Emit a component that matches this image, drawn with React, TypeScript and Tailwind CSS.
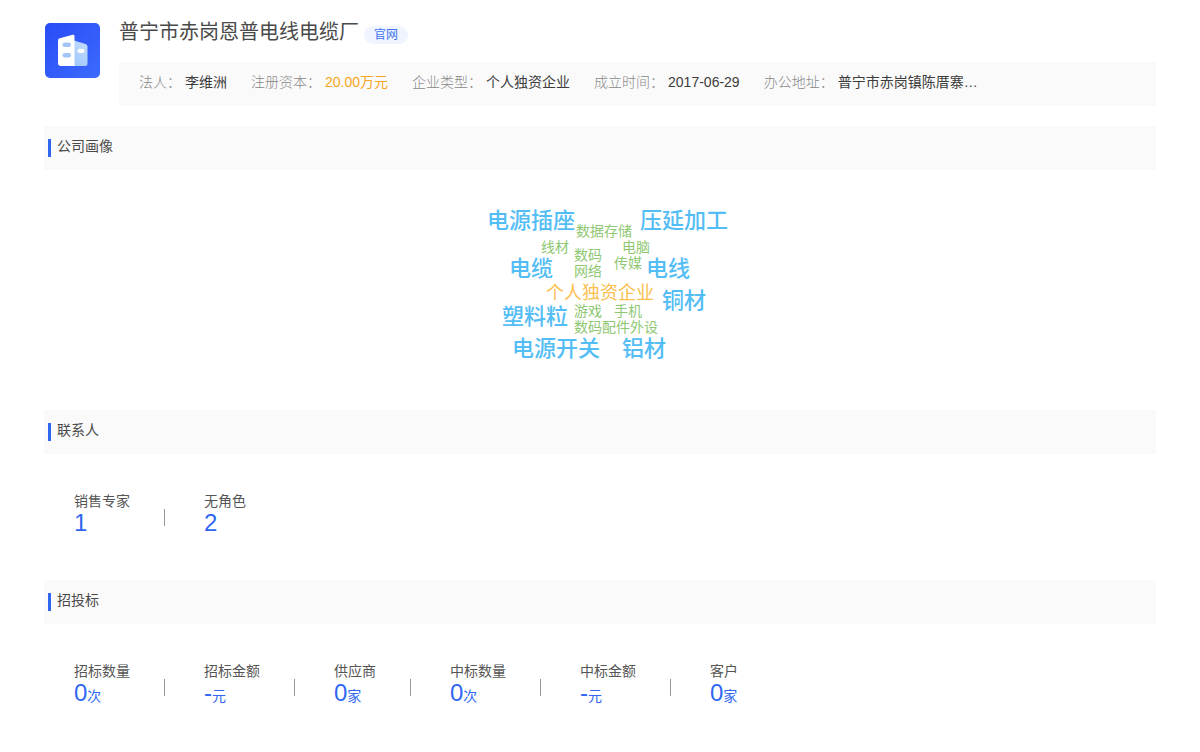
import type { ReactNode } from "react";

type Stat = { label: string; value: string; unit?: string };
type Word = { text: string; className: string };

const info = [
  { label: "法人：", value: "李维洲" },
  { label: "注册资本：", value: "20.00万元", highlight: true },
  { label: "企业类型：", value: "个人独资企业" },
  { label: "成立时间：", value: "2017-06-29" },
  { label: "办公地址：", value: "普宁市赤岗镇陈厝寨…" },
];

const contacts: Stat[] = [
  { label: "销售专家", value: "1" },
  { label: "无角色", value: "2" },
];

const bids: Stat[] = [
  { label: "招标数量", value: "0", unit: "次" },
  { label: "招标金额", value: "-", unit: "元" },
  { label: "供应商", value: "0", unit: "家" },
  { label: "中标数量", value: "0", unit: "次" },
  { label: "中标金额", value: "-", unit: "元" },
  { label: "客户", value: "0", unit: "家" },
];

const large = "text-[22px] leading-8 font-medium text-[#53bdf5]";
const small = "text-sm leading-4 text-[#8fc873]";

const words: Word[] = [
  { text: "电源插座", className: `left-[7px] top-0 ${large}` },
  { text: "压延加工", className: `left-40 top-0 ${large}` },
  { text: "数据存储", className: `left-24 top-[18px] ${small}` },
  { text: "线材", className: `left-[61px] top-[34px] ${small}` },
  { text: "电脑", className: `left-[142px] top-[34px] ${small}` },
  { text: "数码", className: `left-[94px] top-[42px] ${small}` },
  { text: "传媒", className: `left-[134px] top-[50px] ${small}` },
  { text: "电缆", className: `left-[29px] top-12 ${large}` },
  { text: "网络", className: `left-[94px] top-[58px] ${small}` },
  { text: "电线", className: `left-[166px] top-12 ${large}` },
  { text: "个人独资企业", className: "left-[66px] top-[76px] text-lg leading-6 text-[#fac050]" },
  { text: "铜材", className: `left-[182px] top-20 ${large}` },
  { text: "塑料粒", className: `left-[22px] top-24 ${large}` },
  { text: "游戏", className: `left-[94px] top-[98px] ${small}` },
  { text: "手机", className: `left-[134px] top-[98px] ${small}` },
  { text: "数码配件外设", className: `left-[94px] top-[114px] ${small}` },
  { text: "电源开关", className: `left-8 top-32 ${large}` },
  { text: "铝材", className: `left-[142px] top-32 ${large}` },
];

function CompanyLogo() {
  return (
    <svg className="mt-px ml-px size-[55px] shrink-0" viewBox="0 0 55 55" fill="none" aria-hidden="true">
      <defs>
        <linearGradient id="logo-bg" x1="0" y1="0" x2="55" y2="55" gradientUnits="userSpaceOnUse">
          <stop stopColor="#2a4bf8" />
          <stop offset="1" stopColor="#3b6bfb" />
        </linearGradient>
        <linearGradient id="logo-side" x1="29" y1="42" x2="42" y2="20" gradientUnits="userSpaceOnUse">
          <stop stopColor="#a3c8fb" />
          <stop offset="1" stopColor="#c0dcfd" />
        </linearGradient>
      </defs>
      <rect width="55" height="55" rx="5" fill="url(#logo-bg)" />
      <path d="M29 17.5L40.6 21Q42.5 21.6 42.5 23.5V40.5Q42.5 43 40 43H29Z" fill="url(#logo-side)" />
      <path d="M14.8 15.2L27.8 11.8Q29.5 11.4 29.5 13V43H16Q13 43 13 40V17.5Q13 15.7 14.8 15.2Z" fill="#fff" />
      <rect x="17.5" y="19.5" width="8.5" height="4.5" rx="2.25" fill="#a3c5f8" />
      <rect x="17.5" y="30" width="8.5" height="4.5" rx="2.25" fill="#a3c5f8" />
      <rect x="32.5" y="25.8" width="7" height="4.2" rx="2.1" fill="#fff" />
    </svg>
  );
}

function Section({ title, children }: { title: string; children: ReactNode }) {
  return (
    <section>
      <div className="flex h-11 items-center bg-[#fafafa] pl-1">
        <div className="mr-1.5 h-[18px] w-[3px] bg-[#2f67f0]" />
        <h2 className="pb-1 text-sm text-[#4a4a4a]">{title}</h2>
      </div>
      {children}
    </section>
  );
}

function Stats({ items }: { items: Stat[] }) {
  return (
    <div className="flex flex-wrap items-center px-[30px] pt-9 pb-[47px]">
      {items.map((item, i) => (
        <div key={item.label} className="flex items-center">
          {i > 0 && <div className="mt-3 mr-[39px] ml-[34px] h-[17px] w-px bg-[#999]" />}
          <div>
            <div className="text-sm leading-[22px] text-[#555]">{item.label}</div>
            <div className="text-2xl leading-[21px] text-[#2f67f0]">
              {item.value}
              {item.unit && <span className="text-sm leading-none">{item.unit}</span>}
            </div>
          </div>
        </div>
      ))}
    </div>
  );
}

export default function App() {
  return (
    <main className="min-h-screen bg-white px-11 pt-[22px] font-['Liberation_Sans','Noto_Sans_CJK_SC',sans-serif]">
      {/* Company header */}
      <header className="mb-5 flex">
        <CompanyLogo />
        <div className="ml-[19px] min-w-0 flex-1">
          <div className="flex h-10 items-start">
            <h1 className="text-xl leading-5 text-[#4a4a4a]">普宁市赤岗恩普电线电缆厂</h1>
            <a href="#" className="mt-1 ml-[5px] rounded-full bg-[#eff4fe] px-2.5 text-xs leading-[18px] text-[#3f72ee]">
              官网
            </a>
          </div>
          <dl className="flex flex-wrap gap-x-6 bg-[#fafafa] px-5 pt-2.5 pb-3.5 text-sm">
            {info.map((item) => (
              <div key={item.label} className="flex gap-1">
                <dt className="font-light text-[#888]">{item.label}</dt>
                <dd className={item.highlight ? "text-[#f5a623]" : "text-[#3c3c3c]"}>{item.value}</dd>
              </div>
            ))}
          </dl>
        </div>
      </header>

      <Section title="公司画像">
        <div className="h-60 pt-[35px]">
          {/* Word cloud */}
          <div className="relative mx-auto h-40 w-60">
            {words.map((word) => (
              <span key={word.text} className={`absolute whitespace-nowrap ${word.className}`}>
                {word.text}
              </span>
            ))}
          </div>
        </div>
      </Section>

      <Section title="联系人">
        <Stats items={contacts} />
      </Section>

      <Section title="招投标">
        <Stats items={bids} />
      </Section>
    </main>
  );
}
